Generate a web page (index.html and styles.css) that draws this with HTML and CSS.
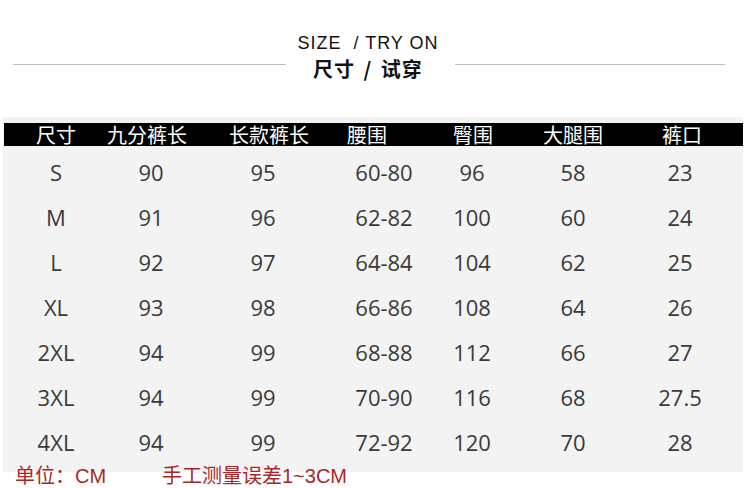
FILE: index.html
```html
<!DOCTYPE html>
<html lang="zh-CN">
<head>
<meta charset="utf-8">
<title>尺寸 / 试穿</title>
<link rel="stylesheet" href="styles.css">
</head>
<body>
<div class="page">
  <div class="title-en">SIZE&nbsp; / TRY ON</div>
  <div class="title-row">
    <span class="rule rule-l"></span>
    <span class="title-cn">尺寸 / 试穿</span>
    <span class="rule rule-r"></span>
  </div>
  <div class="chart">
    <div class="head">
      <span>尺寸</span><span>九分裤长</span><span>长款裤长</span><span>腰围</span><span>臀围</span><span>大腿围</span><span>裤口</span>
    </div>
    <div class="rows">
      <div class="row"><span>S</span><span>90</span><span>95</span><span>60-80</span><span>96</span><span>58</span><span>23</span></div>
      <div class="row"><span>M</span><span>91</span><span>96</span><span>62-82</span><span>100</span><span>60</span><span>24</span></div>
      <div class="row"><span>L</span><span>92</span><span>97</span><span>64-84</span><span>104</span><span>62</span><span>25</span></div>
      <div class="row"><span>XL</span><span>93</span><span>98</span><span>66-86</span><span>108</span><span>64</span><span>26</span></div>
      <div class="row"><span>2XL</span><span>94</span><span>99</span><span>68-88</span><span>112</span><span>66</span><span>27</span></div>
      <div class="row"><span>3XL</span><span>94</span><span>99</span><span>70-90</span><span>116</span><span>68</span><span>27.5</span></div>
      <div class="row"><span>4XL</span><span>94</span><span>99</span><span>72-92</span><span>120</span><span>70</span><span>28</span></div>
    </div>
  </div>
  <div class="note"><span class="unit">单位：CM</span><span>手工测量误差1~3CM</span></div>
</div>
</body>
</html>
```
FILE: styles.css
```css
html, body {
  margin: 0;
  padding: 0;
  background: #ffffff;
}
.page {
  width: 750px;
}
.title-en {
  padding-top: 33px;
  padding-right: 14px;
  line-height: 20px;
  text-align: center;
  font-family: "Liberation Sans", Arial, sans-serif;
  font-size: 18px;
  letter-spacing: 1px;
  color: #111;
}
.title-row {
  display: flex;
  align-items: flex-start;
  height: 29px;
  padding-left: 13px;
}
.rule {
  display: block;
  height: 1px;
  margin-top: 11px;
  background: #bdbdbd;
}
.rule-l { width: 273px; }
.rule-r { width: 270px; }
.title-cn {
  margin: 4px 32px 0 27px;
  line-height: 24px;
  font-family: "Noto Sans CJK SC", sans-serif;
  font-size: 20px;
  font-weight: 700;
  letter-spacing: 1px;
  word-spacing: 3px;
  color: #111;
  white-space: nowrap;
}
.chart {
  margin-top: 35px;
  margin-left: 3px;
  width: 740px;
  box-sizing: border-box;
  padding: 6px 0 7px 1px;
  background: #f3f3f3;
}
.head {
  display: grid;
  grid-template-columns: 71px 122px 118px 106px 90px 119px 1fr;
  padding-left: 32px;
  height: 23px;
  line-height: 23px;
  background: #000;
  color: #fff;
  font-family: "Noto Sans CJK SC", sans-serif;
  font-size: 20px;
  font-weight: 400;
  white-space: nowrap;
}
.rows {
  padding-top: 4px;
}
.row {
  display: grid;
  grid-template-columns: 104px 86px 138px 104px 72px 130px 84px 1fr;
  height: 45px;
  line-height: 45px;
  font-family: "Open Sans", "Noto Sans CJK SC", sans-serif;
  font-size: 22px;
  color: #3a3a3a;
  text-align: center;
}
.note {
  display: flex;
  margin-top: -6px;
  padding-left: 15px;
  line-height: 20px;
  font-family: "Liberation Sans", "Noto Sans CJK SC", sans-serif;
  font-size: 20px;
  color: #a82828;
  white-space: nowrap;
}
.unit {
  width: 147px;
}
```
